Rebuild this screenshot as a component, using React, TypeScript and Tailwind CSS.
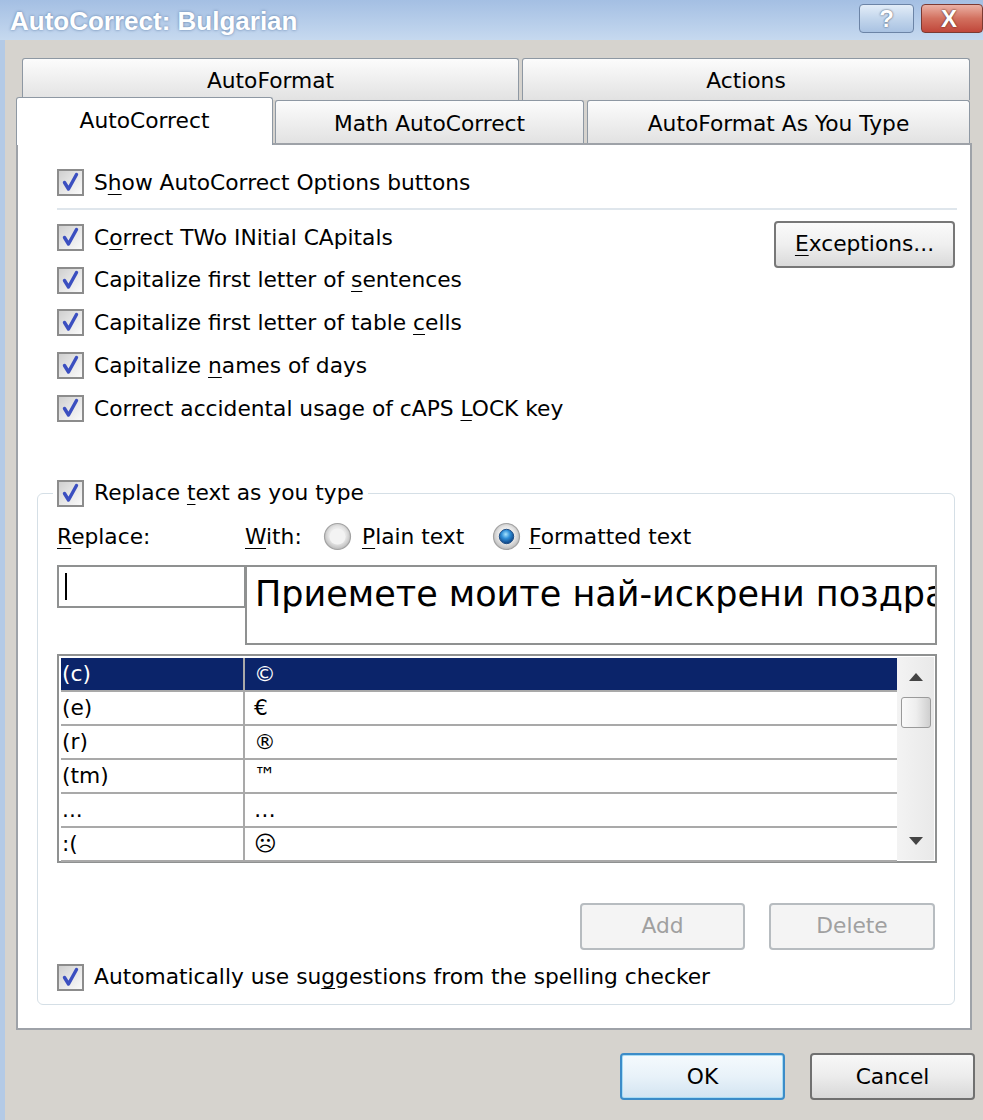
import React from "react";

const Check = () => (
  <span className="w-[27px] h-[27px] shrink-0 border-2 border-[#8c8c8c] bg-linear-to-br from-[#cfcfcf] via-[#e6e6e6] to-[#fafafa] flex items-center justify-center">
    <svg width="21" height="21" viewBox="0 0 21 21">
      <path d="M4.5 10.5 L8.5 17 L16.5 2.5" stroke="#3b4fc0" strokeWidth="3.4" fill="none" strokeLinejoin="round" strokeLinecap="round" />
    </svg>
  </span>
);

const Radio = ({ on }: { on?: boolean }) => (
  <svg width="29" height="29" viewBox="0 0 29 29" className="shrink-0">
    <defs>
      <radialGradient id={on ? "rgOn" : "rgOff"} cx="50%" cy="45%" r="55%">
        <stop offset="0%" stopColor="#ffffff" />
        <stop offset="60%" stopColor="#e6e6e6" />
        <stop offset="100%" stopColor="#b9b9b9" />
      </radialGradient>
      <radialGradient id="dot" cx="45%" cy="35%" r="65%">
        <stop offset="0%" stopColor="#a6e4ff" />
        <stop offset="45%" stopColor="#2f8fd8" />
        <stop offset="100%" stopColor="#0b3f80" />
      </radialGradient>
    </defs>
    <circle cx="14.5" cy="14.5" r="13" fill={`url(#${on ? "rgOn" : "rgOff"})`} stroke="#a3a3a3" strokeWidth="1.2" />
    {on ? (
      <circle cx="14.5" cy="14.5" r="7.2" fill="url(#dot)" stroke="#1f4f86" strokeWidth="1" />
    ) : (
      <circle cx="14.5" cy="14.5" r="8" fill="#f3f3f3" />
    )}
  </svg>
);

const CheckRow = ({ children, h = "h-[42.75px]" }: { children: React.ReactNode; h?: string }) => (
  <div className={`flex items-center gap-[10px] ${h}`}>
    <Check />
    <span className="whitespace-nowrap">{children}</span>
  </div>
);

const U = ({ children }: { children: React.ReactNode }) => (
  <span className="underline decoration-1 underline-offset-[4px]">{children}</span>
);

const rows: [string, string][] = [
  ["(c)", "©"],
  ["(e)", "€"],
  ["(r)", "®"],
  ["(tm)", "™"],
  ["...", "…"],
  [":(", "☹"],
];

export default function App() {
  return (
    <div className="w-[983px] h-[1120px] overflow-hidden bg-[#d6d3ce] flex flex-col font-['DejaVu_Sans',sans-serif] text-[21.75px] leading-none text-black">
      {/* Title bar */}
      <div className="h-[40px] shrink-0 flex items-start bg-linear-to-b from-[#a4bfe3] to-[#c6d9ef]">
        <div className="pl-[10px] pt-[8px] font-['Liberation_Sans',sans-serif] font-bold text-[26px] text-white [text-shadow:0_0_3px_#5d7da6]">
          AutoCorrect: Bulgarian
        </div>
        <div className="ml-auto flex gap-[7px] pt-[4px]">
          <div className="w-[55px] h-[29px] rounded-[4px] border border-[#6c84a6] bg-linear-to-b from-[#e3edf8] via-[#c3d6ec] to-[#a9c2e2] flex items-center justify-center font-['Liberation_Sans',sans-serif] font-bold text-[24px] text-white [text-shadow:0_0_2px_#26364d]">
            ?
          </div>
          <div className="w-[62px] h-[29px] rounded-[4px] border border-[#7c3a32] bg-linear-to-b from-[#eab1a5] via-[#d2705f] to-[#c0463a] flex items-center justify-center pr-[6px] font-['Liberation_Sans',sans-serif] font-bold text-[24px] text-white [text-shadow:0_0_2px_#3a1510]">
            X
          </div>
        </div>
      </div>

      <div className="flex flex-1">
        <div className="w-[5px] bg-[#b4cae6]" />
        <div className="flex-1 flex flex-col pl-[11px] pr-[8px]">
          {/* Tabs row 1 */}
          <div className="flex mt-[18px] ml-[6px] gap-[3px] h-[42px]">
            <div className="w-[497px] border border-b-0 border-[#8e98a3] rounded-t-[3px] bg-linear-to-b from-[#fcfcfc] to-[#e2e2e2] flex items-center justify-center pt-[3px]">
              AutoFormat
            </div>
            <div className="w-[448px] border border-b-0 border-[#8e98a3] rounded-t-[3px] bg-linear-to-b from-[#fcfcfc] to-[#e2e2e2] flex items-center justify-center pt-[3px]">
              Actions
            </div>
          </div>
          {/* Tabs row 2 */}
          <div className="flex items-end mt-[-3px] h-[46px]">
            <div className="relative z-10 w-[257px] h-[48px] mb-[-2px] border border-b-0 border-[#8e98a3] rounded-t-[3px] bg-white flex items-center justify-center pb-[2px]">
              AutoCorrect
            </div>
            <div className="ml-[2px] w-[309px] h-[43px] border border-b-0 border-[#8e98a3] rounded-t-[3px] bg-linear-to-b from-[#fcfcfc] to-[#e2e2e2] flex items-center justify-center pt-[4px]">
              Math AutoCorrect
            </div>
            <div className="ml-[3px] w-[383px] h-[43px] border border-b-0 border-[#8e98a3] rounded-t-[3px] bg-linear-to-b from-[#fcfcfc] to-[#e2e2e2] flex items-center justify-center pt-[4px]">
              AutoFormat As You Type
            </div>
          </div>

          {/* Panel */}
          <div className="w-[956px] h-[887px] border-2 border-[#9ea2a8] bg-white pl-[39px] pr-[15px] pt-[16px] flex flex-col">
            <CheckRow h="h-[43px]">
              S<U>h</U>ow AutoCorrect Options buttons
            </CheckRow>
            <div className="mt-[4px] h-[2px] bg-[#dfe6ec] mr-[-2px]" />
            <div className="mt-[6px] flex">
              <div className="flex-1 flex flex-col">
                <CheckRow>
                  C<U>o</U>rrect TWo INitial CApitals
                </CheckRow>
                <CheckRow>
                  Capitalize first letter of <U>s</U>entences
                </CheckRow>
                <CheckRow>
                  Capitalize first letter of table <U>c</U>ells
                </CheckRow>
                <CheckRow>
                  Capitalize <U>n</U>ames of days
                </CheckRow>
                <CheckRow>
                  Correct accidental usage of cAPS <U>L</U>OCK key
                </CheckRow>
              </div>
              <div className="mt-[4.5px] w-[181px] h-[47px] rounded-[4px] border-2 border-[#777777] bg-linear-to-b from-[#fafafa] via-[#efefef] to-[#dadada] flex items-center justify-center">
                <U>E</U>xceptions...
              </div>
            </div>

            {/* Group */}
            <fieldset className="mt-[42px] ml-[-20px] border border-[#d5dfe6] rounded-[6px] pl-[19px] pr-[17px] pb-[5px] flex flex-col">
              <legend className="ml-[-4px] px-[4px]">
                <CheckRow h="h-[43px]">
                  Replace <U>t</U>ext as you type
                </CheckRow>
              </legend>
              <div className="mt-[7px] h-[30px] flex items-center">
                <span className="w-[188px]">
                  <U>R</U>eplace:
                </span>
                <span className="w-[78px]">
                  <U>W</U>ith:
                </span>
                <Radio />
                <span className="ml-[10px] w-[130px]">
                  <U>P</U>lain text
                </span>
                <Radio on />
                <span className="ml-[8px]">
                  <U>F</U>ormatted text
                </span>
              </div>
              <div className="mt-[13px] flex items-start">
                <div className="w-[189px] h-[43px] border-2 border-[#8f9191] bg-white pl-[6px] pt-[6px]">
                  <div className="w-[2px] h-[27px] bg-black" />
                </div>
                <div className="ml-[-1px] w-[692px] h-[80px] border-2 border-[#8f9191] bg-white overflow-hidden whitespace-nowrap pl-[8px] pt-[10px] text-[35px] font-['DejaVu_Sans',sans-serif]">
                  Приемете моите най-искрени поздравления
                </div>
              </div>

              {/* List */}
              <div className="mt-[9px] w-[880px] h-[209px] border-2 border-[#8f9191] bg-white flex p-[1px]">
                <div className="flex-1 flex flex-col pl-[1px] pt-[1px]">
                  {rows.map(([a, b], i) => (
                    <div
                      key={i}
                      className={`h-[34px] shrink-0 flex border-b-2 border-[#a9a9a9] ${i === 0 ? "bg-[#0b246a] text-white" : ""}`}
                    >
                      <div className="w-[184px] border-r-2 border-[#a9a9a9] flex items-center pl-[1px]">{a}</div>
                      <div className="flex-1 flex items-center pl-[9px]">{b}</div>
                    </div>
                  ))}
                </div>
                <div className="w-[37px] bg-linear-to-r from-[#f3f3f3] to-[#e9e9e9] flex flex-col">
                  <div className="h-[40px] flex items-center justify-center">
                    <svg width="14" height="8" viewBox="0 0 14 8">
                      <path d="M7 0 L14 8 L0 8 Z" fill="#444" />
                    </svg>
                  </div>
                  <div className="mx-auto w-[30px] h-[31px] rounded-[3px] border border-[#9a9a9a] bg-linear-to-r from-[#fafafa] via-[#eeeeee] to-[#cfcfcf]" />
                  <div className="flex-1" />
                  <div className="h-[38px] flex items-center justify-center">
                    <svg width="14" height="8" viewBox="0 0 14 8">
                      <path d="M0 0 L14 0 L7 8 Z" fill="#444" />
                    </svg>
                  </div>
                </div>
              </div>

              <div className="mt-[40px] flex justify-end gap-[24px] mr-[2px]">
                <div className="w-[165px] h-[47px] rounded-[4px] border-2 border-[#b7bcc0] bg-[#f4f4f4] text-[#a0a0a0] flex items-center justify-center">
                  Add
                </div>
                <div className="w-[166px] h-[47px] rounded-[4px] border-2 border-[#b7bcc0] bg-[#f4f4f4] text-[#a0a0a0] flex items-center justify-center">
                  Delete
                </div>
              </div>
              <div className="mt-[6px]">
                <CheckRow h="h-[43px]">
                  Automatically use su<U>g</U>gestions from the spelling checker
                </CheckRow>
              </div>
            </fieldset>
          </div>

          {/* Bottom buttons */}
          <div className="mt-[23px] flex justify-end gap-[25px]">
            <div className="w-[165px] h-[47px] rounded-[4px] border-2 border-[#3c8cc8] bg-linear-to-b from-[#f5fafd] via-[#e8f2f9] to-[#d3e4f1] shadow-[inset_0_0_0_1px_#a8dcf5] flex items-center justify-center">
              OK
            </div>
            <div className="w-[165px] h-[47px] rounded-[4px] border-2 border-[#707070] bg-linear-to-b from-[#f8f8f8] via-[#ececec] to-[#d8d8d8] flex items-center justify-center">
              Cancel
            </div>
          </div>
        </div>
      </div>
    </div>
  );
}
